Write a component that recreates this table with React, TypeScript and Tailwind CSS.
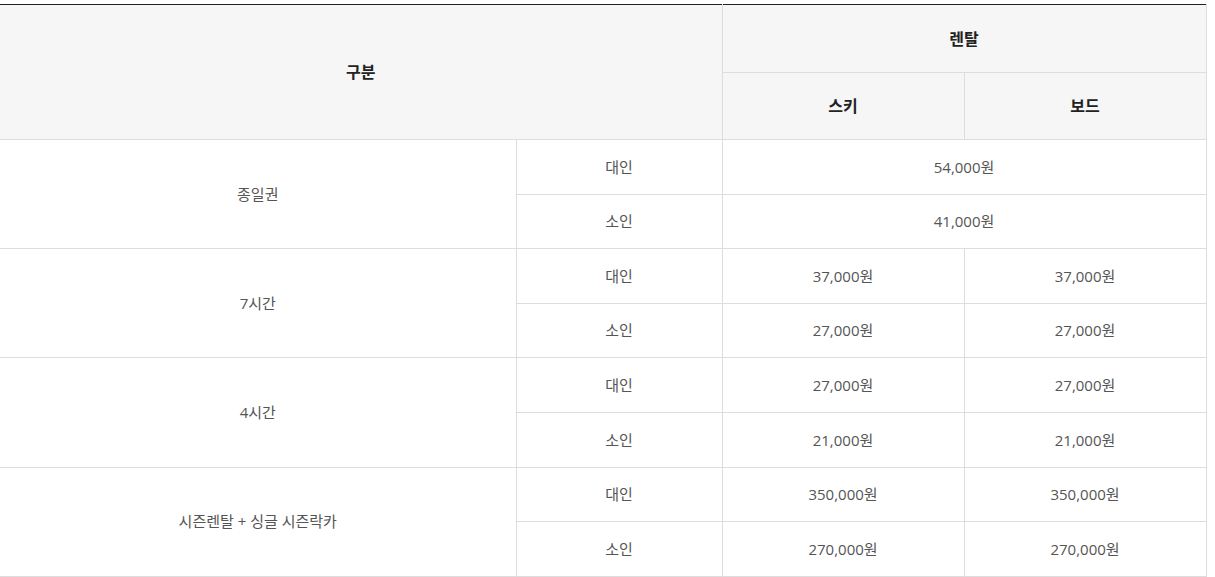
import React from 'react';

interface Row {
  label: string;
  items: { age: string; ski: string; board?: string }[];
}

const rows: Row[] = [
  { label: '종일권', items: [{ age: '대인', ski: '54,000원' }, { age: '소인', ski: '41,000원' }] },
  { label: '7시간', items: [{ age: '대인', ski: '37,000원', board: '37,000원' }, { age: '소인', ski: '27,000원', board: '27,000원' }] },
  { label: '4시간', items: [{ age: '대인', ski: '27,000원', board: '27,000원' }, { age: '소인', ski: '21,000원', board: '21,000원' }] },
  { label: '시즌렌탈 + 싱글 시즌락카', items: [{ age: '대인', ski: '350,000원', board: '350,000원' }, { age: '소인', ski: '270,000원', board: '270,000원' }] },
];

const th = 'border border-[#dddddd] bg-[#f6f6f6] text-[16px] font-bold text-[#222222] text-center';
const td = 'border border-[#dddddd] text-[15px] text-[#555555] text-center h-[54.6px] p-0';

export default function App() {
  return (
    <div className="bg-white pt-1 pr-[9px]" style={{ fontFamily: '"Open Sans", "Noto Sans CJK KR", sans-serif' }}>
      <table className="w-[1206px] table-fixed border-collapse border-t border-t-[#222222]">
        <colgroup>
          <col className="w-[516px]" />
          <col className="w-[206px]" />
          <col className="w-[242px]" />
          <col className="w-[242px]" />
        </colgroup>
        <thead>
          <tr>
            <th colSpan={2} rowSpan={2} className={`${th} border-l-0 border-t-[#222222]`}>구분</th>
            <th colSpan={2} className={`${th} h-[68px] border-t-[#222222]`}>렌탈</th>
          </tr>
          <tr>
            <th className={`${th} h-[67px]`}>스키</th>
            <th className={`${th} h-[67px]`}>보드</th>
          </tr>
        </thead>
        <tbody>
          {rows.map((r) =>
            r.items.map((it, i) => (
              <tr key={r.label + it.age}>
                {i === 0 && (
                  <td rowSpan={2} className={`${td} border-l-0`}>{r.label}</td>
                )}
                <td className={td}>{it.age}</td>
                {it.board ? (
                  <>
                    <td className={td}>{it.ski}</td>
                    <td className={td}>{it.board}</td>
                  </>
                ) : (
                  <td colSpan={2} className={td}>{it.ski}</td>
                )}
              </tr>
            ))
          )}
        </tbody>
      </table>
    </div>
  );
}
